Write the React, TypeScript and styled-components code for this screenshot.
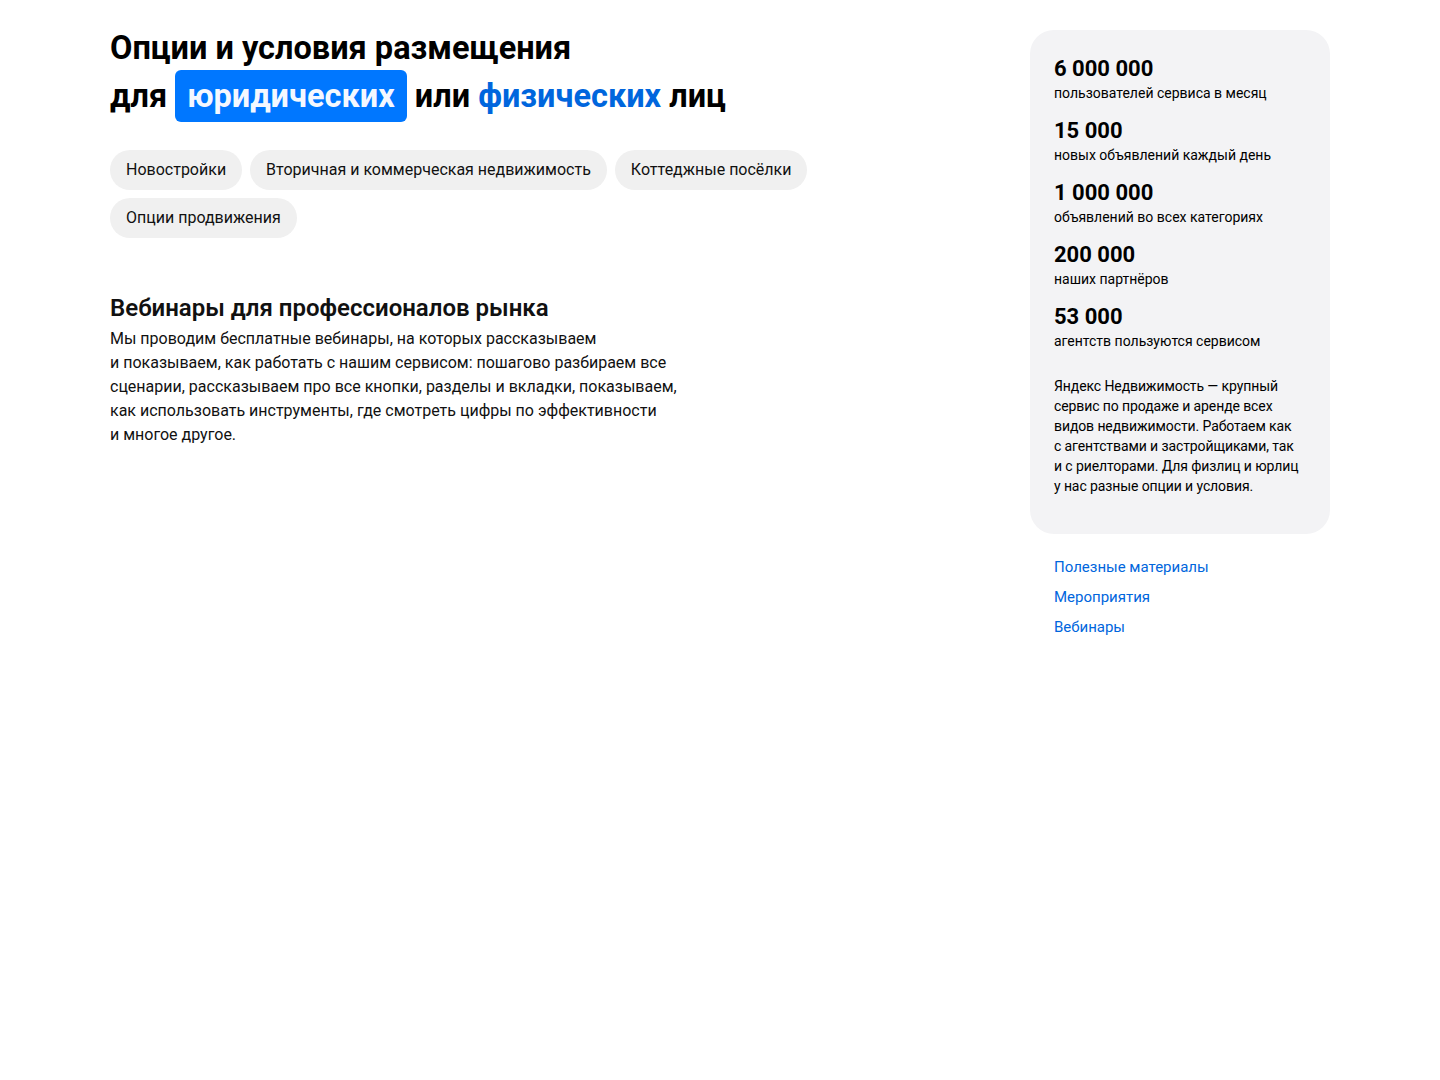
import React from 'react'
import styled, { createGlobalStyle } from 'styled-components'

const GlobalStyle = createGlobalStyle`
  body {
    margin: 0;
    background: #fff;
    font-family: Roboto, "Noto Sans", sans-serif;
    color: #000;
  }
`

const Page = styled.div`
  width: 1220px;
  margin: 0 auto;
  padding-top: 24px;
  display: flex;
  justify-content: space-between;
  align-items: flex-start;
`

const Main = styled.div`
  flex: 1;
`

const Title = styled.h1`
  margin: 0;
  font-size: 32.5px;
  line-height: 48px;
  font-weight: 700;
`

const Highlight = styled.span`
  background: #0077ff;
  color: #f4f8ff;
  border-radius: 6px;
  padding: 7px 12px;
`

const TitleLink = styled.span`
  color: #0066dd;
`

const Chips = styled.div`
  display: flex;
  flex-wrap: wrap;
  gap: 8px;
  margin-top: 30px;
  max-width: 720px;
`

const Chip = styled.button`
  height: 40px;
  padding: 0 16px;
  border: none;
  border-radius: 20px;
  background: #f0f0f0;
  font-family: inherit;
  font-size: 16px;
  line-height: 38px;
  color: #111;
  cursor: pointer;
`

const Section = styled.section`
  margin-top: 56px;
`

const SectionTitle = styled.h2`
  margin: 0;
  font-size: 24px;
  line-height: 28px;
  font-weight: 600;
  color: #111;
`

const SectionText = styled.p`
  margin: 5px 0 0;
  width: 590px;
  font-size: 16px;
  line-height: 24px;
  color: #111;
`

const Aside = styled.aside`
  width: 300px;
  margin-top: 6px;
`

const Card = styled.div`
  background: #f3f3f5;
  border-radius: 24px;
  padding: 25px 24px 38px;
`

const Stats = styled.div`
  display: flex;
  flex-direction: column;
  gap: 14px;
`

const StatValue = styled.div`
  font-size: 22px;
  line-height: 28px;
  font-weight: 700;
`

const StatLabel = styled.div`
  font-size: 14px;
  line-height: 20px;
`

const About = styled.p`
  margin: 25px 0 0;
  font-size: 14px;
  line-height: 20px;
  letter-spacing: -0.1px;
`

const Links = styled.nav`
  display: flex;
  flex-direction: column;
  gap: 10px;
  padding: 23px 24px 0;
`

const Link = styled.a`
  font-size: 15px;
  line-height: 20px;
  color: #0066dd;
  text-decoration: none;
`

const chips = ['Новостройки', 'Вторичная и коммерческая недвижимость', 'Коттеджные посёлки', 'Опции продвижения']

const stats = [
  { value: '6 000 000', label: 'пользователей сервиса в месяц' },
  { value: '15 000', label: 'новых объявлений каждый день' },
  { value: '1 000 000', label: 'объявлений во всех категориях' },
  { value: '200 000', label: 'наших партнёров' },
  { value: '53 000', label: 'агентств пользуются сервисом' },
]

const links = ['Полезные материалы', 'Мероприятия', 'Вебинары']

const webinarText = 'Мы проводим бесплатные вебинары, на которых рассказываем ' +
  'и\u00a0показываем, как работать с\u00a0нашим сервисом: пошагово разбираем все ' +
  'сценарии, рассказываем про все кнопки, разделы и\u00a0вкладки, показываем, ' +
  'как использовать инструменты, где смотреть цифры по\u00a0эффективности ' +
  'и\u00a0многое другое.'

const aboutText = 'Яндекс Недвижимость — крупный сервис по\u00a0продаже и\u00a0аренде всех ' +
  'видов недвижимости. Работаем как с\u00a0агентствами и\u00a0застройщиками, так ' +
  'и\u00a0с\u00a0риелторами. Для физлиц и\u00a0юрлиц у\u00a0нас разные опции и\u00a0условия.'

export default function App() {
  return <>
    <GlobalStyle />
    <Page>
      <Main>
        <Title>
          Опции и условия размещения<br />
          для <Highlight>юридических</Highlight> или <TitleLink>физических</TitleLink> лиц
        </Title>
        <Chips>
          {chips.map(chip => <Chip key={chip}>{chip}</Chip>)}
        </Chips>
        <Section>
          <SectionTitle>Вебинары для профессионалов рынка</SectionTitle>
          <SectionText>{webinarText}</SectionText>
        </Section>
      </Main>
      <Aside>
        <Card>
          <Stats>
            {stats.map(stat => <div key={stat.value}>
              <StatValue>{stat.value}</StatValue>
              <StatLabel>{stat.label}</StatLabel>
            </div>)}
          </Stats>
          <About>{aboutText}</About>
        </Card>
        <Links>
          {links.map(link => <Link key={link} href="#">{link}</Link>)}
        </Links>
      </Aside>
    </Page>
  </>
}
